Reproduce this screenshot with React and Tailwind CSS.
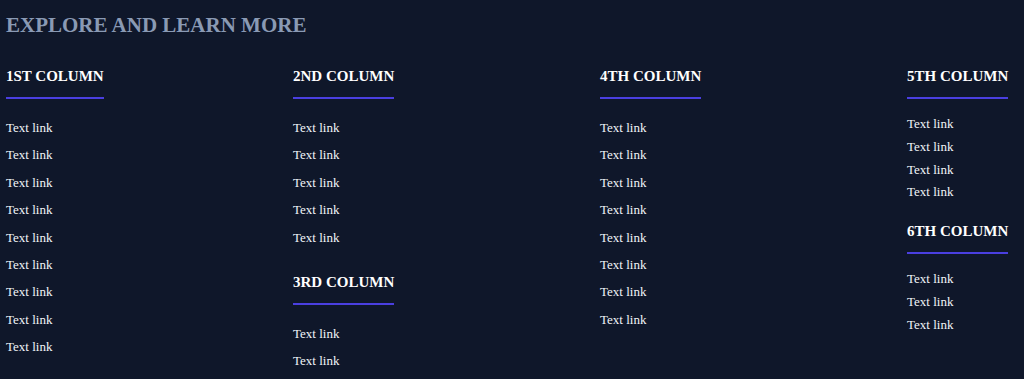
const columns = [
  [{ title: '1ST COLUMN', links: 9, pitch: 'loose', gapTop: 'mt-[15px]' }],
  [
    { title: '2ND COLUMN', links: 5, pitch: 'loose', gapTop: 'mt-[15px]' },
    { title: '3RD COLUMN', links: 2, pitch: 'loose', gapTop: 'mt-[15px]' },
  ],
  [{ title: '4TH COLUMN', links: 8, pitch: 'loose', gapTop: 'mt-[15px]' }],
  [
    { title: '5TH COLUMN', links: 4, pitch: 'tight', gapTop: 'mt-[14px]' },
    { title: '6TH COLUMN', links: 3, pitch: 'tight', gapTop: 'mt-[14px]' },
  ],
]

function LinkGroup({ title, links, pitch, gapTop }) {
  const rowClass =
    pitch === 'tight'
      ? 'text-[13px] leading-[22.8px] text-[#f1f5f9]'
      : 'text-[13px] leading-[27.4px] text-[#f1f5f9]'

  return (
    <div className="flex flex-col items-start">
      <h3 className="inline-block border-b-2 border-[#4a3fe0] pb-[12px] text-[15px] font-bold leading-[18px] text-white">
        {title}
      </h3>
      <ul className={`${gapTop} flex flex-col`}>
        {Array.from({ length: links }).map((_, i) => (
          <li key={i} className={rowClass}>
            <a href="#">Text link</a>
          </li>
        ))}
      </ul>
    </div>
  )
}

export default function App() {
  return (
    <div className="min-h-[379px] w-full bg-[#0f172a] px-[6px] pt-[12px] font-['Liberation_Serif',serif]">
      <h2 className="text-[21px] font-bold leading-[26px] text-[#8a9ab4]">EXPLORE AND LEARN MORE</h2>
      <div className="mt-[29px] grid grid-cols-[287px_307px_307px_1fr]">
        {columns.map((groups, ci) => (
          <div key={ci} className={ci === 3 ? 'flex flex-col gap-[18px]' : 'flex flex-col gap-[22px]'}>
            {groups.map((g) => (
              <LinkGroup key={g.title} {...g} />
            ))}
          </div>
        ))}
      </div>
    </div>
  )
}
